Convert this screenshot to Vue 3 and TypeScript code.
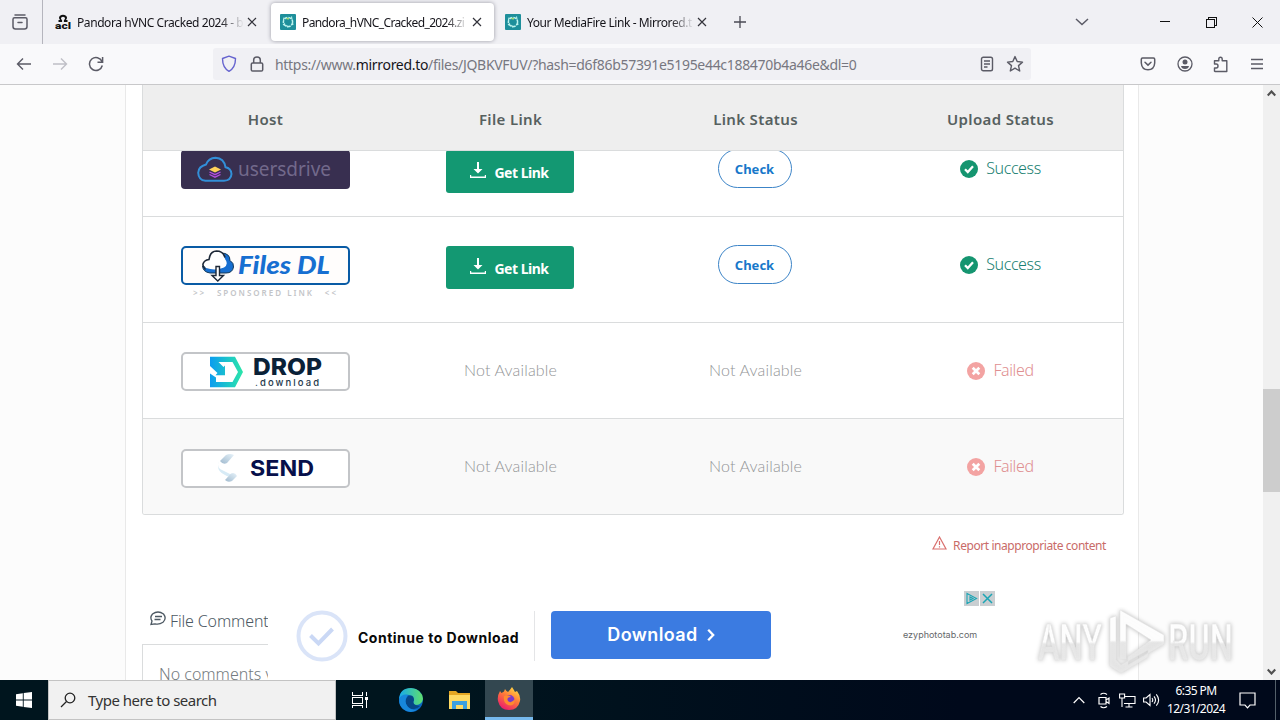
<script setup lang="ts">
interface Tab { title: string; kind: 'acl' | 'mirror'; active: boolean }
interface HostRow { id: 'users' | 'files' | 'drop' | 'send'; ok: boolean; sponsored: boolean }

const tabs: Tab[] = [
  { title: 'Pandora hVNC Cracked 2024 - bl', kind: 'acl', active: false },
  { title: 'Pandora_hVNC_Cracked_2024.zi', kind: 'mirror', active: true },
  { title: 'Your MediaFire Link - Mirrored.t', kind: 'mirror', active: false },
]
const headings: string[] = ['Host', 'File Link', 'Link Status', 'Upload Status']
const rows: HostRow[] = [
  { id: 'users', ok: true, sponsored: false },
  { id: 'files', ok: true, sponsored: true },
  { id: 'drop', ok: false, sponsored: false },
  { id: 'send', ok: false, sponsored: false },
]
</script>

<template>
  <div class="screen">
    <header class="tabbar">
      <div class="archive">
        <svg width="18" height="18" viewBox="0 0 18 18" fill="none" stroke="#5b5b66" stroke-width="1.5" stroke-linecap="round">
          <path d="M4 2h10M2 6.2Q2 4.7 3.5 4.7h11Q16 4.700 16 6.200v7.300Q16 16 13.500 16h-9Q2 16 2 13.500zM7 9.500h4" />
        </svg>
      </div>
      <div v-for="tab in tabs" :key="tab.title" class="tab" :class="{ active: tab.active }">
        <svg v-if="tab.kind === 'acl'" class="fav" width="16" height="16" viewBox="0 0 16 16">
          <path d="M3.500 8V6H5Q3 3.500 5 1.800Q8 -.3 11 1.800Q13 3.500 11 6h1.500v2H8.900V6.200Q11.500 3.500 8 2.700Q4.500 3.500 7.100 6.200V8z" fill="#111" />
          <text x="0" y="15.300" font-family="Roboto" font-weight="900" font-size="9" textLength="16" lengthAdjust="spacingAndGlyphs" fill="#111">acl</text>
        </svg>
        <svg v-else class="fav" width="16" height="16" viewBox="0 0 16 16">
          <rect width="16" height="16" rx="1" fill="#1e8f9b" />
          <g fill="none" stroke="#bdf3ee" stroke-width="1.500" stroke-dasharray="3.200 1.100">
            <circle cx="8" cy="8" r="4.600" />
            <path d="M4 3.500l-.5 2.500M11.500 2.500l.5 3M13.500 10l-2.500 1M8 13.500L6.500 11M3 11l2-1.500" stroke-dasharray="none" stroke-width="1.100" />
            <path d="M6.500 4.500l2.500.200" stroke="#a9e06e" stroke-dasharray="none" />
          </g>
        </svg>
        <span class="tab-title">{{ tab.title }}</span>
        <svg class="close" width="10" height="10" viewBox="0 0 10 10" stroke="#33333b" stroke-width="1.200"><path d="M1 1l8 8M9 1L1 9" /></svg>
      </div>
      <svg class="plus" width="12" height="12" viewBox="0 0 12 12" stroke="#4a4a54" stroke-width="1.300"><path d="M6 0v12M0 6h12" /></svg>
      <div class="window-buttons">
        <svg width="14" height="10" viewBox="0 0 14 10" fill="none" stroke="#5b5b66" stroke-width="1.500"><path d="M1 2l6 5.500L13 2" /></svg>
        <svg width="10" height="10" viewBox="0 0 10 10" stroke="#111" shape-rendering="crispEdges"><path d="M0 4.500h10" /></svg>
        <svg width="11" height="11" viewBox="0 0 11 11" fill="none" stroke="#111" shape-rendering="crispEdges"><path d="M.5 2.500h8v8h-8zM2.500 2.500v-2h8v8h-2" /></svg>
        <svg width="11" height="11" viewBox="0 0 11 11" stroke="#111" stroke-width="1"><path d="M.5 .5l10 10M10.500 .5l-10 10" /></svg>
      </div>
    </header>

    <nav class="toolbar">
      <div class="nav-icons">
        <svg width="16" height="16" viewBox="0 0 16 16" fill="none" stroke="#5b5b66" stroke-width="1.400"><path d="M15 8H1.500M7 2.500L1.500 8 7 13.500" /></svg>
        <svg width="16" height="16" viewBox="0 0 16 16" fill="none" stroke="#bfbfc6" stroke-width="1.400"><path d="M1 8h13.500M9 2.500L14.500 8 9 13.500" /></svg>
        <svg width="16" height="16" viewBox="0 0 16 16" fill="none" stroke="#5b5b66" stroke-width="1.500"><path d="M14 5.500A6.500 6.500 0 1 0 14.300 9.500M14.600 1v5.200H9.500" /></svg>
      </div>
      <div class="urlbar">
        <svg width="16" height="18" viewBox="0 0 16 18" fill="none" stroke="#6664cf" stroke-width="1.400"><path d="M8 1.200L14.500 3.500C14.500 10 13 13.500 8 16.300C3 13.500 1.500 10 1.500 3.500z" stroke-linejoin="round" /></svg>
        <svg class="lock" width="14" height="16" viewBox="0 0 14 16" fill="none" stroke="#5b5b66" stroke-width="1.500"><rect x="1.300" y="7" width="11.400" height="8" rx="1.300" /><path d="M3.700 7V4Q3.700 1 7 1T10.300 4V7" /></svg>
        <span class="url">https://www.<b>mirrored.to</b>/files/JQBKVFUV/?hash=d6f86b57391e5195e44c188470b4a46e&amp;dl=0</span>
        <svg width="14" height="16" viewBox="0 0 14 16" fill="none" stroke="#5b5b66" stroke-width="1.400"><rect x="1.500" y="1.300" width="11" height="13.400" rx="1.800" /><path d="M4 5h6M4 8h6M4 11h3.500" /></svg>
        <svg class="star" width="18" height="18" viewBox="0 0 18 18" fill="none" stroke="#5b5b66" stroke-width="1.400" stroke-linejoin="round"><path d="M9 1.600l2.200 4.900 5.300.6-4 3.500 1.200 5.400L9 13.200 4.300 16l1.200-5.400-4-3.500 5.300-.6z" /></svg>
      </div>
      <div class="tool-icons">
        <svg width="16" height="14" viewBox="0 0 16 14" fill="none" stroke="#5b5b66" stroke-width="1.500" stroke-linecap="round"><path d="M2.500 1h11Q14.700 1 14.700 2.200V6Q14.200 12.800 8 12.800T1.300 6V2.200Q1.300 1 2.500 1zM5 5.300l3 2.800 3-2.800" /></svg>
        <svg width="16" height="16" viewBox="0 0 16 16"><circle cx="8" cy="8" r="7" fill="none" stroke="#5b5b66" stroke-width="1.300" /><circle cx="8" cy="6" r="2.500" fill="#5b5b66" /><path d="M4 10h8Q11.500 13 8 13T4 10z" fill="#5b5b66" /></svg>
        <svg width="16" height="17" viewBox="0 0 16 17" fill="none" stroke="#5b5b66" stroke-width="1.400" stroke-linejoin="round"><path d="M1.500 8V4.700h4.300V3.300Q5.800 1.300 7.500 1.300T9.200 3.300V4.700h4.600v10.800H2Q1.500 15.500 1.500 15v-3h1.700Q5 12 5 10T3.200 8z" /></svg>
        <svg width="14" height="12" viewBox="0 0 14 12" stroke="#5b5b66" stroke-width="1.300"><path d="M1 1.500h12M1 6h12M1 10.500h12" /></svg>
      </div>
    </nav>

    <main class="viewport">
      <div class="page">
        <section class="table">
          <div class="thead"><div v-for="h in headings" :key="h">{{ h }}</div></div>
          <div class="tbody">
            <div v-for="row in rows" :key="row.id" class="row" :class="row.id">
              <div class="cell host">
                <svg class="logo" width="169" height="39" viewBox="0 0 169 39">
                  <template v-if="row.id === 'users'">
                    <rect width="169" height="39" rx="4" fill="#382f50" />
                    <path d="M24.500 30.800H43Q50 30.500 50.500 24Q50 18 44.500 17.200Q43 8 34.500 7.700Q27.500 8 25 14.500Q17.500 16.500 17.200 22.700Q17.500 30 24.500 30.800z" fill="none" stroke="#328fd8" stroke-width="2" />
                    <path d="M28.500 22l5.500 2.700 5.500-2.700M28.500 24.500l5.500 2.700 5.500-2.700" fill="none" stroke="#b64fe0" stroke-width="1.300" />
                    <path d="M28 19.500l6-3 6 3-6 3z" fill="#ffd25a" />
                    <text x="57" y="25.500" font-family="Noto Sans" font-size="19" textLength="93" fill="#72698b">usersdrive</text>
                  </template>
                  <template v-else-if="row.id === 'files'">
                    <rect x="1" y="1" width="167" height="37" rx="4" fill="#fffdfc" stroke="#095ba5" stroke-width="2" />
                    <path d="M40 7Q49 7 49 14.500Q53 17 52.500 21Q51.500 27 45 27H29Q22 26 21.500 20Q30 24 38 21Q46 18 40 7z" fill="#176fd1" stroke="#153958" stroke-width="1" />
                    <path d="M25 22Q21.500 18 23.500 15.500Q25 13.500 28 13.500Q29 5.300 35.500 5Q43 5.300 44 13Q48 18 43 21.500Q34 25 25 22z" fill="#fff" />
                    <path d="M24.500 23.500Q21.500 21 22 18Q23 14.200 28 13.500Q29 5.300 35.500 5Q42 5 44 11.500" fill="none" stroke="#1d2837" stroke-width="1.600" />
                    <path d="M35 20.500h3.500v9h4L36.800 35 31 29.500h4z" fill="#fff" stroke="#1d2837" stroke-width="1.400" />
                    <text x="57" y="28" font-family="Lato" font-style="italic" font-weight="900" font-size="24" textLength="92" lengthAdjust="spacingAndGlyphs" fill="#176fd1">Files DL</text>
                  </template>
                  <template v-else-if="row.id === 'drop'">
                    <defs><linearGradient id="dropGradient"><stop stop-color="#0b9cf0" /><stop offset="1" stop-color="#2be6a9" /></linearGradient></defs>
                    <rect x="1" y="1" width="167" height="37" rx="4" fill="#fff" stroke="#c3c5c8" stroke-width="2" />
                    <path d="M29 4.700H54L62 20 54 35.300H29V21.500L35 25.500V30H51.500L57 20 51.500 10H37.500L42.500 15 44 13.500V23.200H34.500L36.500 21 29 14z" fill="url(#dropGradient)" />
                    <text x="72" y="22.500" font-family="Inter" font-weight="800" font-size="23" textLength="69" lengthAdjust="spacingAndGlyphs" fill="#0a2137">DROP</text>
                    <text x="74" y="34" font-family="Inter" font-weight="500" font-size="9.500" textLength="64" fill="#24394b">.download</text>
                  </template>
                  <template v-else>
                    <defs><linearGradient id="sendGradient" x1="0" x2="1" y1="1" y2="0"><stop stop-color="#9fb9ce" /><stop offset="1" stop-color="#e7f3fa" /></linearGradient></defs>
                    <rect x="1" y="1" width="167" height="37" rx="4" fill="#fff" stroke="#c3c5c8" stroke-width="2" />
                    <path d="M39 12L45 6Q49 4 53 6L46 14Q42 16 39 12z" fill="url(#sendGradient)" />
                    <path d="M38 12Q36 17 39 20L51 26Q49 29 44 26Q37 23 37 17z" fill="#d7ebf6" />
                    <path d="M44 31L50 24.500Q54 23 56 27L51 32Q47 34 44 31z" fill="url(#sendGradient)" />
                    <text x="69" y="27" font-family="Inter" font-weight="700" font-size="22" textLength="64" lengthAdjust="spacingAndGlyphs" fill="#07104b">SEND</text>
                  </template>
                </svg>
                <div v-if="row.sponsored" class="sponsor"><span>&gt;&gt;</span><span>SPONSORED LINK</span><span>&lt;&lt;</span></div>
              </div>
              <template v-if="row.ok">
                <div class="cell action">
                  <button class="get"><svg width="16" height="17" viewBox="0 0 16 17" fill="#fff"><path d="M7 0h2v7h3.500L8 11.500 3.500 7H7zM0 13h1.200v1.500h13.600V13H16v3H0z" /></svg><span>Get Link</span></button>
                </div>
                <div class="cell action"><button class="check">Check</button></div>
                <div class="cell status success">
                  <svg width="18" height="18" viewBox="0 0 18 18"><circle cx="9" cy="9" r="9" fill="#159570" /><path d="M5 9.200l2.800 2.900L13 6.300" stroke="#fff" stroke-width="2.300" fill="none" /></svg><span>Success</span>
                </div>
              </template>
              <template v-else>
                <div class="cell missing">Not Available</div>
                <div class="cell missing">Not Available</div>
                <div class="cell status failed">
                  <svg width="18" height="18" viewBox="0 0 18 18"><circle cx="9" cy="9" r="9" fill="#f3a3a2" /><path d="M5.700 5.700l6.600 6.600M12.300 5.700l-6.600 6.600" stroke="#fff" stroke-width="2.700" /></svg><span>Failed</span>
                </div>
              </template>
            </div>
          </div>
        </section>
        <div class="report">
          <svg width="15" height="14" viewBox="0 0 15 14" fill="none" stroke="#d9706e" stroke-width="1.200"><path d="M7.500 1L14 13H1zM7.500 5v4M7.500 10.200v1.300" /></svg><span>Report inappropriate content</span>
        </div>
        <div class="comments-title">
          <svg width="16" height="15" viewBox="0 0 16 15" fill="none" stroke="#4d5963" stroke-width="1.300"><path d="M1 13.500L2 10Q-.5 6.500 2.500 3Q8 -1 13.500 3Q17 7.500 13 11.300Q9 14 5 12.800zM5 5.500h7M4.500 8.500h6" /></svg><span>File Comments</span>
        </div>
        <div class="comments-box">No comments yet</div>
      </div>

      <aside class="scrollbar">
        <svg width="9" height="7" viewBox="0 0 9 7" fill="none" stroke="#505050" stroke-width="2.200"><path d="M.7 5.500l3.800-4 3.800 4" /></svg>
        <i class="thumb"></i>
        <svg width="9" height="7" viewBox="0 0 9 7" fill="none" stroke="#505050" stroke-width="2.200"><path d="M.7 1.500l3.800 4 3.800-4" /></svg>
      </aside>

      <section class="ad">
        <div class="ad-main">
          <svg width="52" height="52" viewBox="0 0 52 52" fill="none" stroke="#dae4f8" stroke-width="4"><circle cx="26" cy="26" r="23.500" /><path d="M14.500 25.500l8 8L36.500 19" stroke="#cad8f5" /></svg>
          <span class="continue">Continue to Download</span>
          <i class="divider"></i>
          <button class="download"><span>Download</span><svg width="8" height="14" viewBox="0 0 8 14" fill="none" stroke="#fff" stroke-width="2.300"><path d="M1.200 1.800L6.200 7l-5 5.200" /></svg></button>
        </div>
        <div class="ad-side">
          <div class="ad-badges">
            <svg width="15" height="15" viewBox="0 0 15 15"><rect width="15" height="15" fill="#c9ced1" /><path d="M3 2.500l9.500 5L3 12.500zM6 6v3l3-1.500z" fill="none" stroke="#1ba5b5" stroke-width="1.100" /></svg>
            <svg width="15" height="15" viewBox="0 0 15 15"><rect width="15" height="15" fill="#c9ced1" /><path d="M3 3l9 9M12 3l-9 9" stroke="#1ba5b5" stroke-width="1.500" /></svg>
          </div>
          <span>ezyphototab.com</span>
        </div>
      </section>

      <svg class="watermark" width="206" height="70" viewBox="0 0 206 70">
        <defs><linearGradient id="markFade" x1="0" y1="0" x2="0" y2="1"><stop offset=".48" stop-color="#fff" stop-opacity=".97" /><stop offset=".52" stop-color="#ececec" stop-opacity=".8" /></linearGradient></defs>
        <g class="mark-shadow" fill="url(#markFade)" stroke="#e4e4e4" stroke-width=".6" font-family="Roboto" font-weight="500" font-size="50">
          <text x="4" y="53" textLength="64" lengthAdjust="spacingAndGlyphs">ANY</text>
          <text x="134" y="53" textLength="65" lengthAdjust="spacingAndGlyphs">RUN</text>
          <path fill-rule="evenodd" d="M86 3L130 28V37L94 58V50L117 33 92 17V52H86zM76 11L82 9V53L87 58 114 43V50L87 66 76 59z" />
        </g>
      </svg>
    </main>

    <footer class="taskbar">
      <div class="start"><svg width="16" height="16" viewBox="0 0 16 16" fill="#fff"><path d="M0 2.200L6.800 1.200V7.600H0zM7.700 1.100L16 0V7.600H7.700zM0 8.400H6.800V14.800L0 13.800zM7.700 8.400H16V16L7.700 14.900z" /></svg></div>
      <div class="search"><svg width="16" height="16" viewBox="0 0 16 16" fill="none" stroke="#222" stroke-width="1.300"><circle cx="10" cy="6" r="4.800" /><path d="M6.500 9.500L1 15" /></svg><span>Type here to search</span></div>
      <div class="task taskview"><svg width="18" height="16" viewBox="0 0 18 16" fill="none" stroke="#fff" stroke-width="1.100" shape-rendering="crispEdges"><path d="M1.500 0v3.500h10V0M1.500 16v-2.500h10V16M1.500 5.500h10v6h-10zM15.500 0v4M15.500 8v8" /><path d="M14 4.500h3v3h-3z" fill="#fff" stroke="none" /></svg></div>
      <div class="task"><svg width="26" height="26" viewBox="0 0 26 26"><defs><linearGradient id="edgeGreen" x1="0" x2="1"><stop stop-color="#16a9ed" /><stop offset="1" stop-color="#60df6c" /></linearGradient></defs><circle cx="13" cy="13" r="12" fill="#0965c0" /><path d="M1 12Q2 1 13 1Q24 2 25 12Q24 18 17 18Q14 17 16 13Q14 7 7 8Q3 9 1 12z" fill="url(#edgeGreen)" /><path d="M10 9Q16 7 16 13Q13 18 22 19Q16 25 10 20Q5 15 10 9z" fill="#064687" /><path d="M1.500 11Q5 6 10 8Q5 14 10 20Q14 24 20 22Q13 28 5 22Q0 17 1.500 11z" fill="#1787dc" /></svg></div>
      <div class="task"><svg width="23" height="20" viewBox="0 0 23 20"><path d="M1 1h7l2 2h12v16H1z" fill="#e5a723" /><path d="M1 5h21v14H1z" fill="#ffda63" /><path d="M4 11h15v8h-4v-4H8v4H4z" fill="#3da0df" /></svg></div>
      <div class="task selected"><svg width="24" height="25" viewBox="0 0 24 25"><defs><linearGradient id="fireGradient" x1=".8" x2=".2" y1="0" y2="1"><stop stop-color="#ffe044" /><stop offset=".45" stop-color="#ff7939" /><stop offset="1" stop-color="#e91470" /></linearGradient></defs><path d="M3 5L4.500 7 7 5.500 8 3Q9 5 11 6Q13 4 15 1Q17 4 18 6L20 5Q24 10 23 15Q21 24 12 24Q3 24 1 15Q0 10 3 5z" fill="url(#fireGradient)" /><circle cx="12.500" cy="14" r="5" fill="#7a39cc" /><path d="M7 10Q11 8 14 11Q9 11 11 15Q14 18 18 13Q18 21 11 19Q6 17 7 10z" fill="#ff8b2e" /></svg></div>
      <div class="tray">
        <svg width="12" height="8" viewBox="0 0 12 8" fill="none" stroke="#fff" stroke-width="1.200"><path d="M.7 7L6 1.500 11.300 7" /></svg>
        <svg width="12" height="17" viewBox="0 0 12 17" fill="none" stroke="#fff" stroke-width="1.200"><path d="M1 5.500h7v6.500H1zM8 8l3-2v5.500l-3-2M2.500 2.500Q5.500 0 9 2.500M2.500 14.500Q5.500 17 9 14.500" /></svg>
        <svg width="17" height="15" viewBox="0 0 17 15" fill="none" stroke="#fff" stroke-width="1.100"><path d="M5 3.500h11v7H5M10 10.500v3.500M6.500 14h7M.6 1h5v4h-5zM3 5v9" /></svg>
        <svg width="17" height="14" viewBox="0 0 17 14" fill="none" stroke="#fff" stroke-width="1.100"><path d="M.6 5v4h2.500L7 12.500v-11L3.100 5zM9 5Q10.500 7 9 9M11 3.300Q14 7 11 10.700M13.300 1.300Q18 7 13.300 12.700" /></svg>
      </div>
      <div class="clock"><span>6:35 PM</span><span>12/31/2024</span></div>
      <svg class="notice" width="17" height="17" viewBox="0 0 17 17" fill="none" stroke="#fff" stroke-width="1.200"><path d="M1 1h15v12h-5l-2.500 2.800L6 13H1z" /></svg>
      <i class="peek"></i>
    </footer>
  </div>
</template>

<style>
html, body { margin: 0; overflow: hidden; background: #fff; }
</style>
<style scoped>
* { box-sizing: border-box; }
svg { display: block; flex: none; }
button { border: 0; padding: 0; margin: 0; font: inherit; }
.screen { width: 1280px; height: 720px; display: flex; flex-direction: column; overflow: hidden; font-family: "Noto Sans", "Open Sans", sans-serif; white-space: nowrap; }
.tabbar { height: 44px; flex: none; background: #f0f0f4; display: flex; align-items: center; }
.archive { width: 43px; height: 44px; border-right: 1px solid #b5b5bd; padding: 13px 0 0 11px; margin-right: 3px; }
.tab { width: 225px; height: 38px; display: flex; align-items: center; padding-left: 9px; font-size: 12px; color: #15141a; }
.tab.active { width: 223px; margin-right: 2px; background: #fff; border-radius: 4px; box-shadow: 0 0 4px #9999a3; }
.tab-title { margin-left: 6px; width: 167px; overflow: hidden; letter-spacing: -.42px; mask-image: linear-gradient(90deg, #000 86%, transparent 100%); }
.tab.active .tab-title { letter-spacing: -.62px; }
.close { margin-left: 3px; }
.plus { margin-left: 13px; }
.window-buttons { margin-left: auto; width: 205px; padding-right: 18px; display: grid; grid-template-columns: 85px 46px 46px 11px; align-items: center; }
.toolbar { height: 41px; flex: none; background: #f9f9fb; border-bottom: 1px solid #c8c8ca; display: flex; align-items: center; }
.nav-icons { width: 213px; padding-left: 16px; display: flex; gap: 20px; }
.urlbar { width: 818px; height: 32px; background: #f0f0f4; border-radius: 3px; display: flex; align-items: center; padding: 0 7px 0 8px; }
.lock { margin-left: 13px; }
.url { margin-left: 11px; flex: 1; color: #777780; font-size: 14px; letter-spacing: -.31px; }
.url b { color: #15141a; font-weight: 400; }
.star { margin-left: 12px; }
.tool-icons { margin-left: 109px; width: 124px; display: flex; align-items: center; justify-content: space-between; }
.viewport { height: 595px; flex: none; display: flex; justify-content: space-between; position: relative; background: #fcfcfc; overflow: hidden; }
.page { width: 1014px; margin-left: 125px; height: 595px; background: #fff; border: solid #e9e9e9; border-width: 0 1px; padding-left: 16px; overflow: hidden; }
.table { width: 982px; height: 430px; border: 1px solid #dadcdd; border-top: 0; border-radius: 0 0 3px 3px; overflow: hidden; }
.thead { height: 66px; background: #eee; border-bottom: 1px solid #dadcdd; display: grid; grid-template-columns: repeat(4, 245px); align-items: center; padding-top: 2px; text-align: center; color: #56605f; font-size: 15px; font-weight: 600; letter-spacing: .35px; }
.tbody { height: 363px; overflow: hidden; display: flex; flex-direction: column; justify-content: flex-end; }
.row { height: 96px; flex: none; border-bottom: 1px solid #dadcdd; display: grid; grid-template-columns: repeat(4, 245px); }
.row.files { height: 106px; }
.row.send { background: #f9f9f9; border-bottom: 0; height: 95px; }
.cell { height: 95px; display: flex; align-items: center; justify-content: center; }
.action { padding-right: 2px; }
.host { flex-direction: column; justify-content: flex-start; padding-top: 29px; }
.send .host { padding-top: 30px; }
.sponsor { width: 145px; display: flex; justify-content: space-between; font-size: 8px; line-height: 10px; margin-top: 3px; font-weight: 600; color: #c3c5c8; letter-spacing: 2px; }
.get { width: 128px; height: 43px; margin-top: 6px; border-radius: 3px; background: #139872; color: #fff; display: flex; align-items: center; justify-content: center; font-size: 14px; font-weight: 700; letter-spacing: -.5px; gap: 8px; }
.get svg { margin-bottom: 3px; }
.get span { padding-top: 2px; }
.check { width: 74px; height: 39px; border: 1px solid #3c84c7; border-radius: 20px; color: #1878ca; background: #fff; font-size: 13px; font-weight: 700; }
.status { gap: 8px; font-size: 16px; font-weight: 300; letter-spacing: -.4px; }
.status span { padding-bottom: 1px; }
.success { color: #1a7f72; }
.failed { color: #df8f91; }
.missing { color: #929496; font-family: Lato, sans-serif; font-size: 16px; font-weight: 300; letter-spacing: .15px; padding-bottom: 2px; }
.report { height: 20px; margin: 20px 32px 0 0; display: flex; justify-content: flex-end; align-items: center; color: #c96b68; font-size: 12px; gap: 6px; letter-spacing: -.43px; }
.report svg { margin-bottom: 4px; }
.report span { padding-top: 1px; }
.comments-title { height: 25px; margin-top: 53px; padding-left: 8px; display: flex; align-items: center; color: #4d5963; font-size: 16px; font-weight: 300; gap: 4px; letter-spacing: -.15px; }
.comments-title svg { margin-bottom: 4px; }
.comments-box { width: 982px; height: 60px; margin-top: 11px; border: 1px solid #dadcdd; padding: 17px 16px; font-size: 16px; line-height: 24px; font-weight: 300; color: #747b80; }
.scrollbar { width: 17px; height: 595px; background: #f0f0f0; display: flex; flex-direction: column; align-items: center; padding: 5px 0; }
.thumb { width: 17px; height: 103px; margin: 292px 0 auto; background: #cdcdcd; }
.ad { position: absolute; left: 268px; top: 499px; width: 860px; height: 96px; background: #fff; display: flex; justify-content: space-between; }
.ad-main { display: flex; align-items: center; height: 80px; margin-top: 12px; padding-left: 28px; }
.continue { width: 162px; margin: 2px 0 0 10px; font-family: Inter, sans-serif; font-size: 14px; font-weight: 700; color: #080808; letter-spacing: .5px; }
.divider { width: 1px; height: 50px; background: #e4e5e7; margin-left: 14px; }
.download { width: 220px; height: 48px; margin: -3px 0 0 16px; background: #3b7be1; border-radius: 4px; color: #fff; display: flex; align-items: center; justify-content: center; gap: 9px; font-family: Inter, sans-serif; font-weight: 600; font-size: 18px; letter-spacing: .4px; }
.ad-side { width: 225px; padding-top: 7px; color: #65676a; font-family: Inter, sans-serif; font-size: 9px; }
.ad-badges { display: flex; gap: 1px; margin: 0 0 23px 61px; }
.watermark { position: absolute; left: 1034px; top: 522px; }
.mark-shadow { filter: drop-shadow(0 0 2px #b5b5b5); }
.taskbar { height: 40px; flex: none; background: linear-gradient(90deg, #00151e 0, #00151e 35%, #00091b 75%); color: #fff; display: flex; align-items: center; }
.start { width: 48px; padding-left: 16px; }
.search { width: 288px; height: 40px; background: #f1f1f1; border: 1px solid #c3c3c3; color: #333; display: flex; align-items: center; padding-left: 11px; gap: 12px; font-size: 15px; letter-spacing: -.5px; }
.task { width: 48px; height: 40px; display: flex; align-items: center; justify-content: center; }
.taskview { width: 51px; padding-right: 4px; }
.selected { background: #334750; border-bottom: 3px solid #76b9ed; margin-left: 2px; }
.tray { margin-left: auto; width: 87px; display: grid; grid-template-columns: 25px 21px 24px 17px; align-items: center; }
.clock { width: 72px; display: flex; flex-direction: column; align-items: center; line-height: 18px; font-size: 12px; letter-spacing: -.6px; }
.notice { margin: 0 0 0 7px; }
.peek { width: 1px; height: 40px; background: #53606a; margin: 0 4px 0 19px; }
</style>
